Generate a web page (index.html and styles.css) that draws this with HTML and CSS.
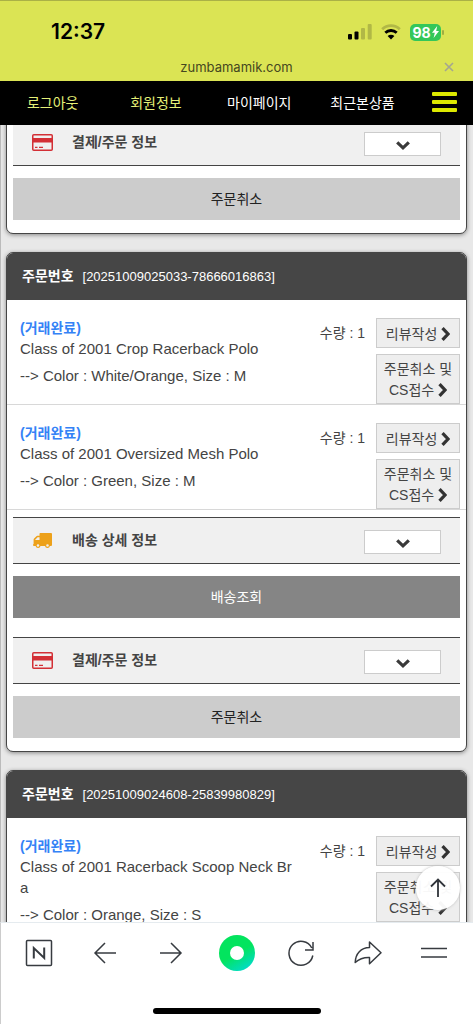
FILE: index.html
```html
<!DOCTYPE html>
<html lang="ko">
<head>
<meta charset="utf-8">
<meta name="viewport" content="width=device-width, initial-scale=1">
<title>주문내역</title>
<link rel="stylesheet" href="styles.css">
</head>
<body>
<svg class="defs" aria-hidden="true">
  <symbol id="card" viewBox="0 0 21 17"><rect x=".75" y=".75" width="19.5" height="15.5" rx="1" fill="none" stroke="#d32f35" stroke-width="1.5"/><path d="M1 4h19v4.500H1z" fill="#d32f35"/><path d="M3 13.300h2.500M7 13.300h4" stroke="#d32f35" stroke-width="1.300"/></symbol>
  <symbol id="truck" viewBox="-1 -1 21 17"><path fill="#eda11a" fill-rule="evenodd" d="M7.500 0H18a1 1 0 0 1 1 1v11a1 1 0 0 1-1 1h-1.100a2.500 2.500 0 0 1-4.900 0H7.500a2.500 2.500 0 0 1-4.900 0H1a1 1 0 0 1-1-1c0-.6.5-.8.600-1V6.700c0-.5.200-.9.500-1.200l2.100-2.100c.3-.3.700-.6 1.200-.6h2.100V1c0-.6.400-1 1-1zM2.200 6.900h4.300V4.300H4.600L2.200 6.700zM5 11.200a1.300 1.300 0 1 0 0 2.600 1.300 1.300 0 0 0 0-2.600zm9.500 0a1.300 1.300 0 1 0 0 2.600 1.300 1.300 0 0 0 0-2.600z"/></symbol>
  <symbol id="down" viewBox="0 0 14 9"><path d="M1.200 1.300 7 6.800l5.800-5.500" fill="none" stroke="#3a3a3a" stroke-width="3.200"/></symbol>
  <symbol id="right" viewBox="0 0 9 14"><path d="M1.500 1.200 7 7l-5.500 5.800" fill="none" stroke="#333" stroke-width="3.200"/></symbol>
</svg>
<div class="app">
  <header class="browser">
    <div class="status">
      <span class="clock">12:37</span>
      <div class="signals">
        <svg width="24" height="16" viewBox="0 0 24 16" aria-label="신호"><rect x="0" y="10" width="4" height="5.500" rx="1"/><rect x="6.500" y="7.500" width="4" height="8" rx="1"/><g fill="#b1b846"><rect x="13" y="4" width="4" height="11.500" rx="1"/><rect x="19.700" y="0" width="4" height="15.500" rx="1"/></g></svg>
        <svg width="20" height="16" viewBox="0 0 20 16" fill="none" aria-label="Wi-Fi"><path d="M1.200 5.300a12.500 12.500 0 0 1 17.600 0" stroke="#b1b846" stroke-width="2.800"/><path d="M4.300 8.800a8.200 8.200 0 0 1 11.400 0" stroke="#000" stroke-width="2.800"/><path d="M6.600 12.100a4.900 4.900 0 0 1 6.800 0L10 15.500z" fill="#000"/></svg>
        <div class="battery"><span>98</span><svg width="7" height="12" viewBox="0 0 7 12" aria-hidden="true"><path d="M5.200 0 0 6.800h2.800L1.600 12 7 5H4.200z" fill="#fff"/></svg></div>
      </div>
    </div>
    <div class="address">
      <span>zumbamamik.com</span>
      <button class="close" aria-label="닫기"><svg width="10" height="10" viewBox="0 0 10 10"><path d="m1 1 8 8M9 1 1 9" stroke="#a4a690" stroke-width="1.600"/></svg></button>
    </div>
  </header>
  <nav class="nav">
    <a class="accent" href="#">로그아웃</a>
    <a class="accent" href="#">회원정보</a>
    <a href="#">마이페이지</a>
    <a href="#">최근본상품</a>
    <button class="burger" aria-label="메뉴"><i></i><i></i><i></i></button>
  </nav>
  <main class="content">
    <div class="orders">
      <section class="order bare">
        <div class="panel"><svg class="picto" width="21" height="17"><use href="#card"/></svg><strong>결제/주문 정보</strong><button class="toggle" aria-label="결제/주문 정보 펼치기"><svg width="14" height="9"><use href="#down"/></svg></button></div>
        <button class="wide">주문취소</button>
      </section>
      <section class="order">
        <h2 class="head"><b>주문번호</b><span>[20251009025033-78666016863]</span></h2>
        <article class="item">
          <div class="info"><b class="state">(거래완료)</b><p>Class of 2001 Crop Racerback Polo</p><p class="option">--&gt; Color : White/Orange, Size : M</p></div>
          <span class="qty">수량 : 1</span>
          <div class="actions"><button>리뷰작성 <svg width="9" height="14"><use href="#right"/></svg></button><button>주문취소 및<br>CS접수 <svg width="9" height="14"><use href="#right"/></svg></button></div>
        </article>
        <article class="item">
          <div class="info"><b class="state">(거래완료)</b><p>Class of 2001 Oversized Mesh Polo</p><p class="option">--&gt; Color : Green, Size : M</p></div>
          <span class="qty">수량 : 1</span>
          <div class="actions"><button>리뷰작성 <svg width="9" height="14"><use href="#right"/></svg></button><button>주문취소 및<br>CS접수 <svg width="9" height="14"><use href="#right"/></svg></button></div>
        </article>
        <div class="panel first"><svg class="picto" width="21" height="17"><use href="#truck"/></svg><strong>배송 상세 정보</strong><button class="toggle" aria-label="배송 상세 정보 펼치기"><svg width="14" height="9"><use href="#down"/></svg></button></div>
        <button class="wide dark">배송조회</button>
        <div class="panel"><svg class="picto" width="21" height="17"><use href="#card"/></svg><strong>결제/주문 정보</strong><button class="toggle" aria-label="결제/주문 정보 펼치기"><svg width="14" height="9"><use href="#down"/></svg></button></div>
        <button class="wide">주문취소</button>
      </section>
      <section class="order">
        <h2 class="head"><b>주문번호</b><span>[20251009024608-25839980829]</span></h2>
        <article class="item">
          <div class="info"><b class="state">(거래완료)</b><p>Class of 2001 Racerback Scoop Neck Bra</p><p class="option">--&gt; Color : Orange, Size : S</p></div>
          <span class="qty">수량 : 1</span>
          <div class="actions"><button>리뷰작성 <svg width="9" height="14"><use href="#right"/></svg></button><button>주문취소 및<br>CS접수 <svg width="9" height="14"><use href="#right"/></svg></button></div>
        </article>
      </section>
    </div>
    <button class="to-top" aria-label="맨 위로"><svg width="18" height="20" viewBox="0 0 18 20" fill="none" stroke="#30343a" stroke-width="1.800"><path d="M9 1.500V19M2 8.500l7-7 7 7"/></svg></button>
  </main>
  <footer class="toolbar">
    <div class="tools">
      <button aria-label="네이버"><svg viewBox="0 0 28 28"><rect x="1.500" y="1.500" width="25" height="25" rx="1"/><path d="M8.800 19.500V9l10.400 10V8.500" stroke-width="2"/></svg></button>
      <button aria-label="뒤로"><svg viewBox="0 0 28 28"><path d="M25 14H4M14 4 4 14l10 10"/></svg></button>
      <button aria-label="앞으로"><svg viewBox="0 0 28 28"><path d="M3 14h21M14 4l10 10-10 10"/></svg></button>
      <button aria-label="그린닷"><span class="dot"></span></button>
      <button aria-label="새로고침"><svg viewBox="0 0 28 28"><path d="M24.800 16.500A12 12 0 1 1 23.800 9M25 3v8h-8"/></svg></button>
      <button aria-label="공유"><svg viewBox="0 0 28 28"><path d="M15.500 3 27 13.700 15.500 24.800v-6.300C9 18.300 5 20 1.200 23.500 1.500 14.500 7 8.800 15.500 8.600z" stroke-linejoin="round"/></svg></button>
      <button aria-label="더보기"><svg viewBox="0 0 28 28"><path d="M1 9.500h26M1 18h26"/></svg></button>
    </div>
    <div class="home"></div>
  </footer>
</div>
</body>
</html>
```
FILE: styles.css
```css
* { box-sizing: border-box; }
body { margin: 0; background: #e8e8e8; color: #444; font: 15px/21px "Liberation Sans", "Noto Sans CJK KR", sans-serif; }
button { font: inherit; color: inherit; padding: 0; border: 0; background: none; cursor: pointer; }
a { color: inherit; text-decoration: none; }
p, h2 { margin: 0; }
svg { flex: none; }
.defs { display: none; }
.app { display: flex; flex-direction: column; height: 100vh; }

.browser { background: #dbe454; border-top: 1px solid #aab146; }
.status { display: flex; justify-content: space-between; align-items: center; padding: 16px 32px 0 51px; height: 46px; }
.clock { font: 600 21px/30px Inter, sans-serif; color: #000; }
.signals { display: flex; align-items: center; gap: 9px; }
.battery { position: relative; display: flex; align-items: center; justify-content: center; gap: 1px; width: 31px; height: 17px; border-radius: 5px; background: #34c759; color: #fff; font: 700 14px/17px Inter, sans-serif; }
.battery::after { content: ""; position: absolute; right: -3px; top: 6px; width: 2px; height: 5px; border-radius: 1px; background: #9fae42; }
.address { display: grid; grid-template-columns: 1fr auto 1fr; align-items: center; height: 34px; padding: 6px 18px 0; font: 13px/20px Inter, sans-serif; color: #454720; }
.address span { grid-column: 2; }
.close { justify-self: end; display: flex; padding: 1px; }

.nav { display: flex; align-items: center; height: 44px; background: #000; color: #fff; font-size: 14px; }
.nav a { flex: 7; text-align: center; padding-left: 2px; }
.nav .accent { color: #e5f078; }
.burger { flex: 4; display: flex; flex-direction: column; align-items: center; gap: 4px; padding: 0 0 2px 2px; }
.burger i { width: 25px; height: 4px; border-radius: 1px; background: #dce800; }

.content { position: relative; flex: 1; min-height: 0; overflow: hidden; border-left: 1px solid #bbb; }
.orders { display: flex; flex-direction: column; gap: 18px; margin-top: -20px; padding: 0 6px 0 5px; }
.order { padding-bottom: 13px; border: 1px solid #464646; border-radius: 7px; background: #fff; box-shadow: 0 1px 4px #888; overflow: hidden; flex: none; }
.bare { padding-top: 13px; }
.head { display: flex; align-items: center; gap: 9px; height: 47px; padding: 0 15px; background: #464646; color: #fff; font-size: 14px; font-weight: 400; }
.head span { font-size: 13px; }
.item { display: grid; grid-template-columns: minmax(0, 1fr) auto 84px; column-gap: 11px; padding: 18px 6px 0 13px; border-bottom: 1px solid #d8d8d8; }
.info { padding-right: 12px; word-break: break-all; }
.state { display: block; color: #3482f6; font-size: 14px; line-height: 20px; }
.option { margin-top: 6px; }
.qty { padding-top: 5px; font-size: 14px; }
.actions { display: flex; flex-direction: column; gap: 6px; font-size: 14px; }
.actions button { border: 1px solid #ccc; background: #eee; color: #444; min-height: 30px; padding: 4px 0 2px; }
.actions svg { vertical-align: -2px; }
.panel { display: flex; align-items: center; height: 47px; margin: 0 6px; padding: 0 19px; border: solid #444; border-width: 1px 0; background: #f0f0f0; }
.panel strong { flex: 1; margin-left: 19px; font-size: 14px; }
.toggle { display: flex; align-items: center; justify-content: center; width: 77px; height: 24px; margin-top: 2px; padding-top: 3px; border: 1px solid #ccc; background: #fff; }
.first { margin-top: 7px; }
.wide { display: block; width: calc(100% - 12px); height: 42px; margin: 12px 6px 0; background: #ccc; color: #222; font-size: 14px; }
.dark { background: #858585; color: #fff; }
.wide + .panel { margin-top: 19px; }
.to-top { position: absolute; right: 13px; bottom: 12px; display: flex; align-items: center; justify-content: center; width: 44px; height: 44px; border-radius: 50%; background: #fffffff5; box-shadow: 0 0 3px #bbb; }

.toolbar { background: #fff; border-left: 1px solid #ccc; border-top: 1px solid #e5ebef; height: 102px; display: flex; flex-direction: column; align-items: center; }
.tools { display: flex; align-items: center; width: 100%; height: 60px; padding: 0 6px 0 5px; }
.tools button { flex: 1; display: flex; justify-content: center; }
.tools svg { width: 28px; height: 28px; fill: none; stroke: #373b40; stroke-width: 1.5; }
.dot { width: 36px; height: 36px; border: 11px solid transparent; border-radius: 50%; background: linear-gradient(#fff, #fff) padding-box, linear-gradient(150deg, #03e45e 50%, #00d9e8) border-box; }
.home { width: 168px; height: 6px; margin-top: 25px; border-radius: 3px; background: #000; }
```
